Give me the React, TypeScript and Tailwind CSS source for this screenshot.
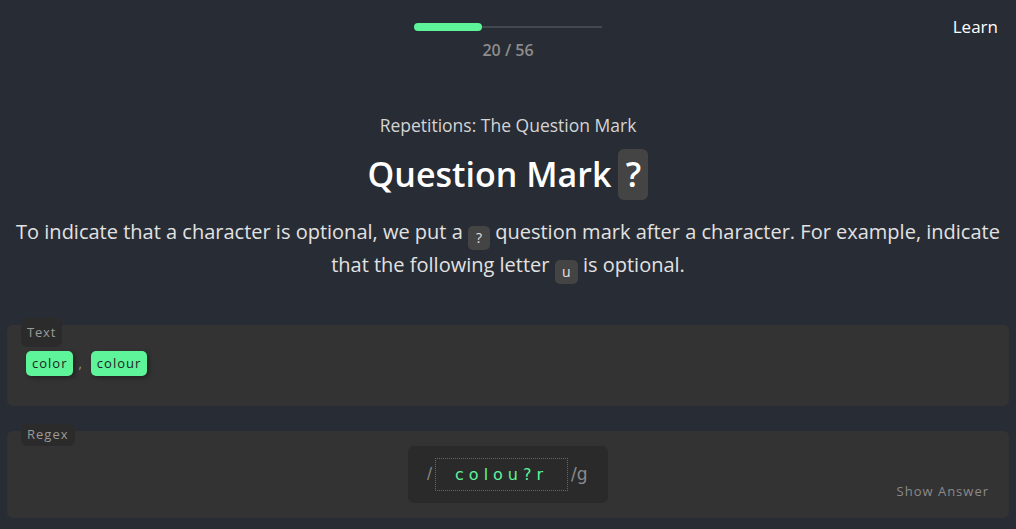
import React from "react";

export default function App() {
  return (
    <div className="w-[1016px] h-[529px] bg-[#282c34] overflow-hidden text-white" style={{ fontFamily: '"Open Sans", sans-serif' }}>
      <div className="relative flex flex-col items-center pt-[22px]">
        <div className="relative w-[188px] h-[10px] flex items-center">
          <div className="absolute left-0 right-0 h-[2px] bg-[#44484f]" />
          <div className="absolute left-0 w-[68px] h-[8px] rounded-full bg-[#5ef49a]" />
        </div>
        <div className="mt-[7px] text-[16px] font-semibold text-[#8d8d8d] leading-[22px]">20 / 56</div>
        <div className="absolute right-[18px] top-[16px] text-[17px] leading-[22px] text-white">Learn</div>
      </div>

      <div className="flex flex-col items-center mt-[52px]">
        <div className="text-[17.5px] leading-[24px] text-[#d4d4d4]">Repetitions: The Question Mark</div>
        <div className="mt-[11px] flex items-center text-[34px] font-semibold leading-[52px] text-white">
          <span>Question Mark</span>
          <span className="ml-[7px] inline-flex items-center justify-center w-[30px] h-[51px] rounded-[6px] bg-[#444444]">?</span>
        </div>
        <p className="mt-[15px] w-[1000px] text-center text-[20px] leading-[33px] text-[#e2e2e2]">
          To indicate that a character is optional, we put a{" "}
          <span className="relative top-[2px] inline-block w-[22px] h-[24px] rounded-[5px] bg-[#444444] text-center text-[14px] leading-[24px] align-[-2px]">?</span>{" "}
          question mark after a character. For example, indicate that the following letter{" "}
          <span className="relative top-[3px] inline-block w-[23px] h-[24px] rounded-[5px] bg-[#444444] text-center text-[14px] leading-[24px] align-[-2px]">u</span>{" "}
          is optional.
        </p>
      </div>

      <div className="px-[7px] mt-[44px]">
        <div className="relative h-[81px] rounded-[6px] bg-[#333333]">
          <div className="absolute left-[14px] top-[-7px] h-[29px] px-[6px] rounded-[6px] bg-[#2b2b2b] text-[13px] leading-[29px] tracking-[0.8px] text-[#9a9a9a]">Text</div>
          <div className="flex items-center pt-[26px] pl-[19px]">
            <span className="h-[25px] px-[6px] rounded-[5px] bg-[#5ef49a] text-[13px] leading-[25px] tracking-[1px] text-[#1e1e1e] shadow-[2px_2px_4px_rgba(0,0,0,0.35)]">color</span>
            <span className="mx-[5px] text-[13px] text-[#9a9a9a]">,</span>
            <span className="ml-[4px] h-[25px] px-[6px] rounded-[5px] bg-[#5ef49a] text-[13px] leading-[25px] tracking-[1px] text-[#1e1e1e] shadow-[2px_2px_4px_rgba(0,0,0,0.35)]">colour</span>
          </div>
        </div>

        <div className="relative mt-[25px] h-[87px] rounded-[6px] bg-[#333333]">
          <div className="absolute left-[14px] top-[-7px] h-[22px] px-[6px] rounded-[6px] bg-[#2b2b2b] text-[13px] leading-[20px] tracking-[1px] text-[#9a9a9a]">Regex</div>
          <div className="flex justify-center pt-[15px]">
            <div className="flex items-center w-[200px] h-[57px] rounded-[6px] bg-[#2a2a2a] pl-[19px]">
              <span className="text-[15px] text-[#8a8a8a]" style={{ fontFamily: '"DejaVu Sans", sans-serif' }}>/</span>
              <div className="ml-[3px] w-[133px] h-[33px] border border-dotted border-[#666666] flex items-center justify-center text-[16px] tracking-[5px] text-[#5ef49a]" style={{ fontFamily: '"DejaVu Sans", sans-serif' }}>colou?r</div>
              <span className="ml-[3px] text-[17px] text-[#8a8a8a]" style={{ fontFamily: '"DejaVu Sans", sans-serif' }}>/g</span>
            </div>
          </div>
          <div className="absolute right-[20px] bottom-[18px] text-[13px] leading-[18px] tracking-[1px] text-[#8a8a8a]">Show Answer</div>
        </div>
      </div>
    </div>
  );
}
